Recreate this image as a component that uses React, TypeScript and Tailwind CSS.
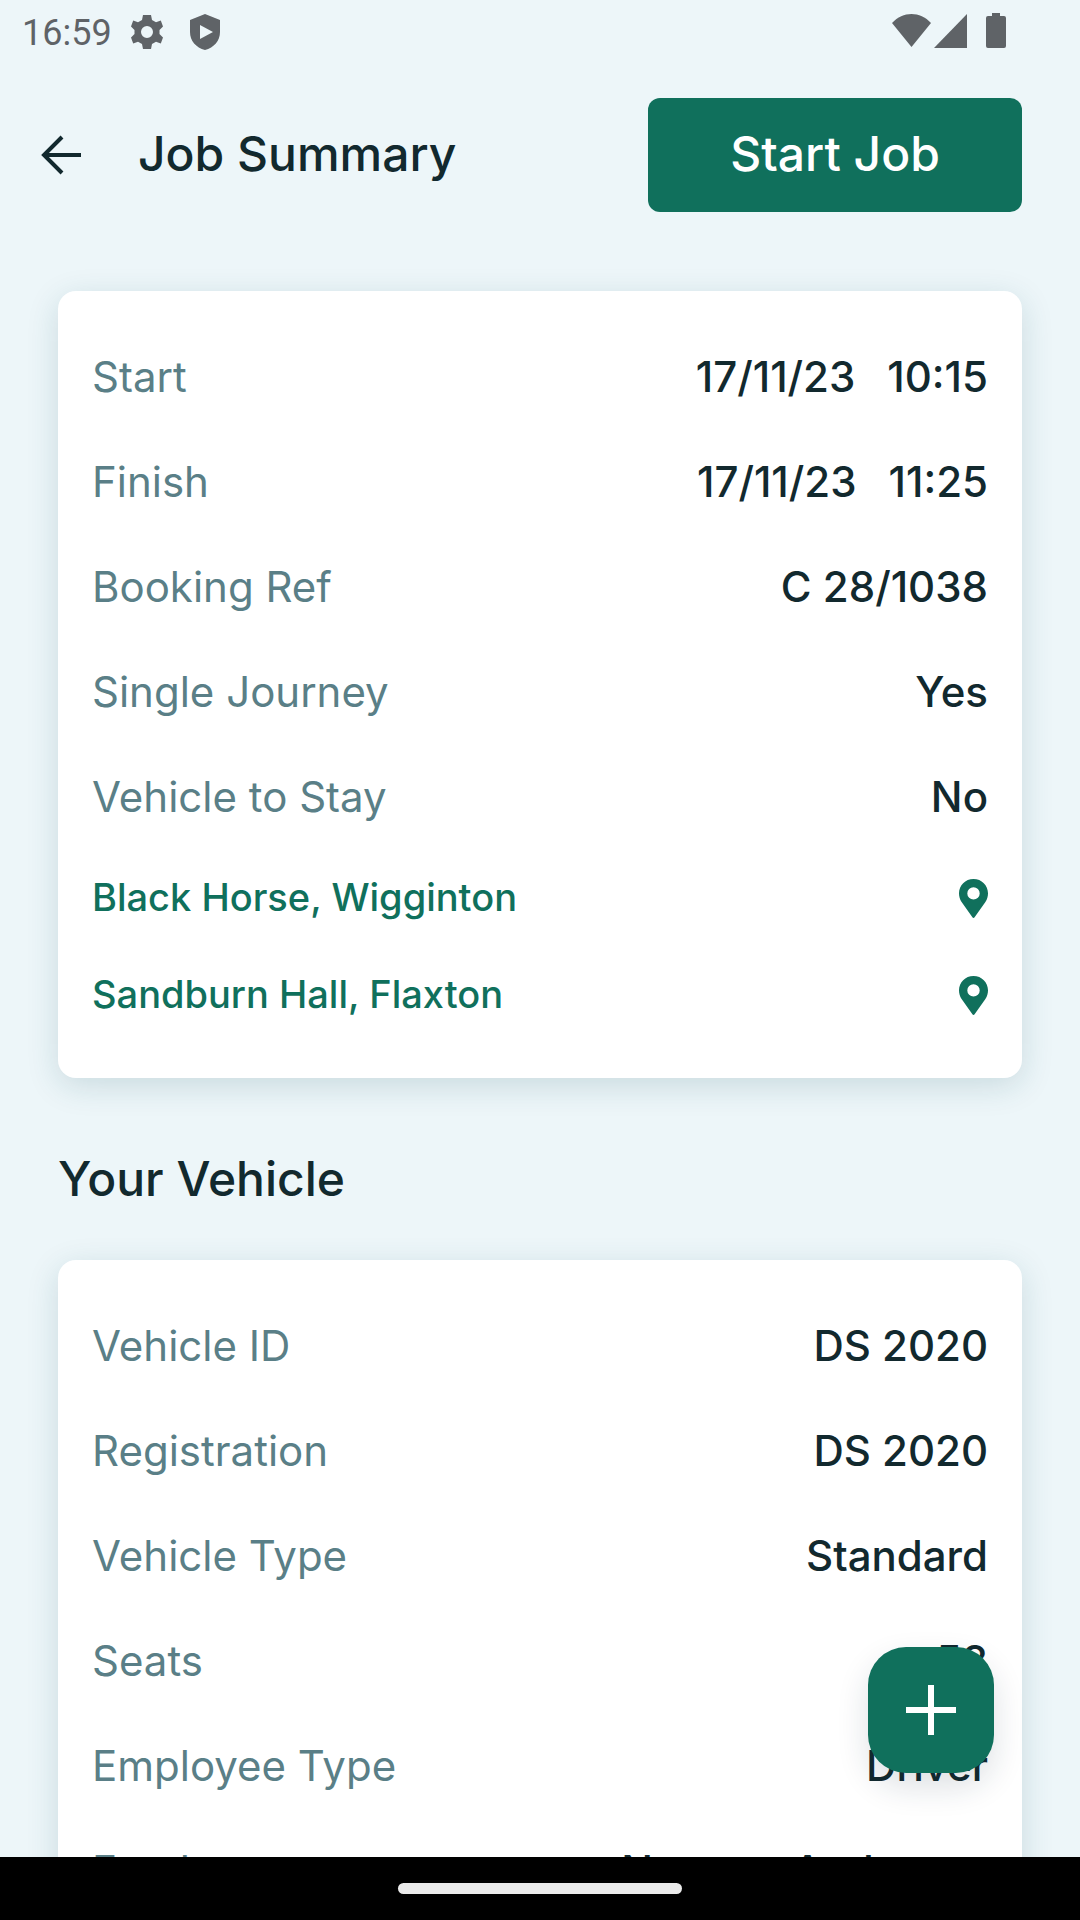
import React, { useState } from 'react';

interface Detail {
  label: string;
  value: string[];
}

const jobDetails: Detail[] = [
  { label: 'Start', value: ['17/11/23', '10:15'] },
  { label: 'Finish', value: ['17/11/23', '11:25'] },
  { label: 'Booking Ref', value: ['C 28/1038'] },
  { label: 'Single Journey', value: ['Yes'] },
  { label: 'Vehicle to Stay', value: ['No'] },
];

const vehicleDetails: Detail[] = [
  { label: 'Vehicle ID', value: ['DS 2020'] },
  { label: 'Registration', value: ['DS 2020'] },
  { label: 'Vehicle Type', value: ['Standard'] },
  { label: 'Seats', value: ['53'] },
  { label: 'Employee Type', value: ['Driver'] },
  { label: 'Employee', value: ['Norman Anderson'] },
];

const locations = ['Black Horse, Wigginton', 'Sandburn Hall, Flaxton'];

const StatusBar: React.FC = () => (
  <div className="flex h-16 shrink-0 items-center justify-between pl-[22px] pr-[74px] text-[#5f6367]">
    <div className="flex items-center">
      <span className="pt-[3px] font-[Roboto,sans-serif] text-[36px] leading-[61px]">16:59</span>
      <svg className="ml-[19px] h-[34px] w-8" viewBox="0 0 32 34" fill="currentColor">
        <path
          fillRule="evenodd"
          d="M12 0h8l1 5 4 2.200 4.800-1.600L32 11.500 28.500 15v4L32 22.500l-2.200 6-4.800-1.700L21 29l-1 5h-8l-1-5-4-2.200-4.800 1.700L0 22.500 3.500 19v-4L0 11.500l2.200-5.900L7 7.200 11 5zM16 11a6 6 0 1 0 0 12 6 6 0 0 0 0-12z"
        />
      </svg>
      <svg className="ml-[27px] h-9 w-[30px]" viewBox="0 0 30 36" fill="currentColor">
        <path
          fillRule="evenodd"
          d="M15 0 30 6v12c0 9-6 15.500-15 18C6 33.500 0 27 0 18V6zM10 11v14l13-7z"
        />
      </svg>
    </div>
    <div className="flex items-center pb-[3px]">
      <svg className="h-[34px] w-[39px]" viewBox="0 0 39 34" fill="currentColor">
        <path d="M0 9C11-3 28-3 39 9L19.500 33z" />
      </svg>
      <svg className="ml-[3px] h-[34px] w-[33px]" viewBox="0 0 33 34" fill="currentColor">
        <path d="M33 0v34H0z" />
      </svg>
      <svg className="ml-[19px] h-[35px] w-5" viewBox="0 0 20 35" fill="currentColor">
        <path d="M6 0h8v3h4a2 2 0 0 1 2 2v28a2 2 0 0 1-2 2H2a2 2 0 0 1-2-2V5a2 2 0 0 1 2-2h4z" />
      </svg>
    </div>
  </div>
);

const PinIcon: React.FC = () => (
  <svg className="h-[39px] w-[29px]" viewBox="0 0 29 39" fill="currentColor">
    <path
      fillRule="evenodd"
      d="M14.500 0C6.300 0 0 6.300 0 14.300c0 3.200.8 6 2.600 8.700L13.400 38.300c.6.900 1.600.900 2.200 0L26.400 23c1.800-2.700 2.600-5.500 2.600-8.700C29 6.300 22.700 0 14.500 0zm0 8.200a6.200 6.200 0 1 1 0 12.400 6.200 6.200 0 0 1 0-12.400z"
    />
  </svg>
);

const Card: React.FC<{ children: React.ReactNode }> = ({ children }) => (
  <div className="rounded-[18px] bg-white p-[34px] shadow-[0_8px_32px_rgba(18,80,96,0.16)]">
    {children}
  </div>
);

const DetailRows: React.FC<{ details: Detail[] }> = ({ details }) => (
  <dl>
    {details.map(({ label, value }) => (
      <div key={label} className="flex h-[105px] items-center justify-between pb-[3px] text-[42px]">
        <dt className="text-[#5a7f87]">{label}</dt>
        <dd className="flex gap-8 font-medium">
          {value.map((part) => (
            <span key={part}>{part}</span>
          ))}
        </dd>
      </div>
    ))}
  </dl>
);

const App: React.FC = () => {
  const [started, setStarted] = useState(false);

  return (
    <div className="relative flex h-screen flex-col bg-[#edf6f9] font-[Inter,sans-serif] text-[#12292e]">
      <StatusBar />
      <header className="flex shrink-0 items-center pl-[41px] pr-[58px] pt-[34px]">
        <button type="button" aria-label="Back">
          <svg
            className="block size-10"
            viewBox="0 0 40 40"
            fill="none"
            stroke="currentColor"
            strokeWidth="4"
          >
            <path d="M40 20H3M21 2 3 20l18 18" />
          </svg>
        </button>
        <h1 className="ml-[57px] pb-[3px] text-[48px] font-medium">Job Summary</h1>
        <button
          type="button"
          onClick={() => setStarted(true)}
          disabled={started}
          className="ml-auto h-[114px] w-[374px] rounded-xl bg-[#10705c] pb-[3px] text-[48px] font-medium text-white"
        >
          Start Job
        </button>
      </header>

      <main className="min-h-0 flex-1 overflow-y-auto px-[58px] pt-[79px] [scrollbar-width:none]">
        <Card>
          <DetailRows details={jobDetails} />
          {locations.map((location) => (
            <a
              key={location}
              href="#map"
              className="flex h-[97px] items-center justify-between text-[38px] font-medium text-[#10705c]"
            >
              <span className="pb-[3px]">{location}</span>
              <PinIcon />
            </a>
          ))}
        </Card>
        <h2 className="flex h-[182px] items-center pt-5 text-[48px] font-medium">Your Vehicle</h2>
        <Card>
          <DetailRows details={vehicleDetails} />
        </Card>
      </main>

      <button
        type="button"
        aria-label="Add"
        className="absolute bottom-[147px] right-[86px] flex size-[126px] items-center justify-center rounded-[38px] bg-[#10705c] text-white shadow-[0_14px_32px_rgba(18,41,66,0.14)]"
      >
        <svg className="size-[50px]" viewBox="0 0 50 50" stroke="currentColor" strokeWidth="6">
          <path d="M25 0v50M0 25h50" />
        </svg>
      </button>

      <div className="flex h-[63px] shrink-0 items-center justify-center bg-black">
        <div className="h-[11px] w-[284px] rounded-full bg-[#ebebeb]" />
      </div>
    </div>
  );
};

export default App;
